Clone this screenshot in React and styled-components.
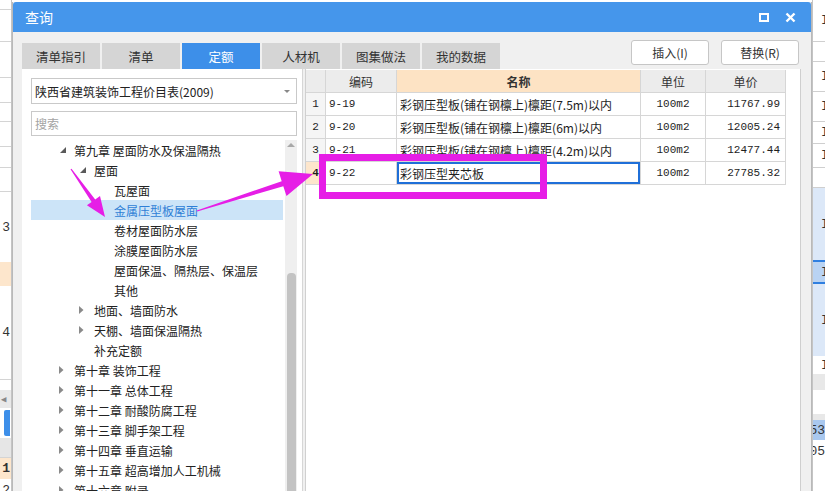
import React from "react";
import styled, { createGlobalStyle } from "styled-components";

const GlobalStyle = createGlobalStyle`
	html, body {
		margin: 0;
		padding: 0;
		background: #ffffff;
		overflow: hidden;
	}
	body {
		font-family: "Noto Sans CJK SC", "Noto Sans", sans-serif;
		font-size: 12px;
		color: #222;
	}
`;

const Page = styled.div`
	position: relative;
	width: 825px;
	height: 491px;
	display: flex;
	flex-direction: row;
	overflow: hidden;
	background: #fff;
`;

/* ---------- the app behind the dialog ---------- */

const Strip = styled.div`
	width: ${(p) => p.w}px;
	flex: 0 0 auto;
	display: flex;
	flex-direction: column;
	background: #fff;
	overflow: hidden;
	border-${(p) => p.side}: 1px solid #c4c4c4;
	box-sizing: border-box;
`;

const StripCell = styled.div`
	height: ${(p) => p.h}px;
	flex: 0 0 auto;
	box-sizing: border-box;
	background: ${(p) => p.bg || "transparent"};
	border-bottom: ${(p) => (p.line ? `1px solid ${p.line}` : "none")};
	border-top: ${(p) => (p.top ? `2px solid ${p.top}` : "none")};
	display: flex;
	align-items: center;
	justify-content: ${(p) => p.justify || "flex-end"};
	padding: 0 1px 0 ${(p) => p.indent || 1}px;
	font-family: "Liberation Mono", monospace;
	font-size: 13px;
	font-weight: ${(p) => (p.bold ? 700 : 400)};
	color: #333;
	white-space: nowrap;
	overflow: hidden;
`;

const BlueTab = styled.div`
	width: 6px;
	height: 26px;
	margin-left: auto;
	background: #3d8fe9;
	border-radius: 2px 0 0 2px;
`;

/* ---------- dialog ---------- */

const Dialog = styled.div`
	width: 800px;
	flex: 0 0 auto;
	margin-top: 2px;
	display: flex;
	flex-direction: column;
	background: #f0f0f0;
	border-left: 1px solid #b9b9b9;
	border-right: 1px solid #b9b9b9;
	box-sizing: border-box;
`;

const TitleBar = styled.div`
	height: 30px;
	flex: 0 0 auto;
	background: #4596eb;
	border-radius: 3px 3px 0 0;
	display: flex;
	align-items: center;
	padding: 0 10px 0 12px;
	color: #fff;
	font-size: 14px;
`;

const TitleText = styled.div`
	flex: 1 0 0;
`;

const TitleButton = styled.div`
	width: 22px;
	height: 20px;
	display: flex;
	align-items: center;
	justify-content: center;
	margin-left: ${(p) => p.gap || 0}px;
`;

const Body = styled.div`
	flex: 1 0 0;
	display: flex;
	flex-direction: column;
	padding: 11px 10px 0 9px;
	min-height: 0;
`;

const TopRow = styled.div`
	height: 26px;
	display: flex;
	flex-direction: row;
	align-items: flex-start;
`;

const Tab = styled.div`
	width: 78px;
	height: 26px;
	margin-right: 2px;
	display: flex;
	align-items: center;
	justify-content: center;
	background: ${(p) => (p.active ? "#3d8fe9" : "#d5d5d5")};
	color: ${(p) => (p.active ? "#fff" : "#333")};
	font-size: 12.5px;
`;

const Buttons = styled.div`
	margin-left: auto;
	margin-top: -3px;
	margin-right: 2px;
	display: flex;
	gap: 12px;
`;

const Button = styled.div`
	width: 78px;
	height: 25px;
	box-sizing: border-box;
	border: 1px solid #c6c6c6;
	border-radius: 3px;
	background: #fff;
	display: flex;
	align-items: center;
	justify-content: center;
	font-size: 12px;
	color: #333;
`;

const Content = styled.div`
	flex: 1 0 0;
	display: flex;
	flex-direction: row;
	gap: 2px;
	min-height: 0;
`;

/* ---------- left panel ---------- */

const LeftPanel = styled.div`
	width: 281px;
	flex: 0 0 auto;
	background: #fff;
	border-right: 1px solid #d6d6d6;
	box-sizing: border-box;
	display: flex;
	flex-direction: column;
	padding: 9px 5px 0 9px;
	overflow: hidden;
`;

const Select = styled.div`
	height: 26px;
	box-sizing: border-box;
	border: 1px solid #c9c9c9;
	display: flex;
	align-items: center;
	padding: 0 6px 0 3px;
	font-size: 12px;
	color: #222;
`;

const SelectText = styled.div`
	flex: 1 0 0;
`;

const Caret = styled.div`
	width: 0;
	height: 0;
	border-left: 3px solid transparent;
	border-right: 3px solid transparent;
	border-top: 3px solid #888;
`;

const Search = styled.div`
	height: 25px;
	margin-top: 7px;
	box-sizing: border-box;
	border: 1px solid #c9c9c9;
	display: flex;
	align-items: center;
	padding: 0 3px;
	font-size: 12px;
	color: #a3a3a3;
`;

const TreeArea = styled.div`
	flex: 1 0 0;
	margin-top: 4px;
	display: flex;
	flex-direction: row;
	min-height: 0;
`;

const Tree = styled.div`
	flex: 1 0 0;
	display: flex;
	flex-direction: column;
	padding-right: 2px;
`;

const TreeRow = styled.div`
	height: 20px;
	flex: 0 0 auto;
	display: flex;
	align-items: center;
	padding-left: ${(p) => 27 + p.level * 20}px;
	background: ${(p) => (p.selected ? "#cce4f8" : "transparent")};
	color: ${(p) => (p.selected ? "#2f7fd6" : "#222")};
	font-size: 12px;
	white-space: nowrap;
`;

const Toggle = styled.div`
	width: 16px;
	height: 20px;
	flex: 0 0 auto;
	display: flex;
	align-items: center;
	justify-content: flex-start;
	padding-left: ${(p) => (p.open ? 2 : 1)}px;
	box-sizing: border-box;
`;

const Scrollbar = styled.div`
	width: 12px;
	flex: 0 0 auto;
	background: #efefef;
	display: flex;
	flex-direction: column;
	align-items: center;
`;

const ScrollArrow = styled.div`
	margin-top: 3px;
	width: 0;
	height: 0;
	border-left: 4px solid transparent;
	border-right: 4px solid transparent;
	border-bottom: 4px solid #a8a8a8;
`;

const ScrollThumb = styled.div`
	margin-top: 126px;
	width: 9px;
	flex: 1 0 0;
	background: #c3c3c3;
	border-radius: 4px 4px 0 0;
`;

/* ---------- right panel / grid ---------- */

const RightPanel = styled.div`
	flex: 1 0 0;
	background: #fff;
	border-left: 1px solid #d0d0d0;
	border-right: 1px solid #cfcfcf;
	padding-top: 1px;
	display: flex;
	flex-direction: column;
`;

const GridRow = styled.div`
	display: grid;
	grid-template-columns: 20px 71px 244px 65px 80px;
	height: 23px;
	width: 480px;
`;

const Cell = styled.div`
	box-sizing: border-box;
	border-right: 1px solid #d6d6d6;
	border-bottom: 1px solid #d6d6d6;
	display: flex;
	align-items: center;
	justify-content: ${(p) => p.align || "flex-start"};
	padding: 0 ${(p) => (p.align === "flex-end" ? 5 : 3)}px;
	background: ${(p) => p.bg || "#fff"};
	font-family: ${(p) =>
		p.mono ? `"Liberation Mono", "Noto Sans CJK SC", monospace` : `"Noto Sans CJK SC", sans-serif`};
	font-size: ${(p) => (p.mono ? "11px" : "12px")};
	font-weight: ${(p) => (p.bold ? 700 : 400)};
	color: #1e1e1e;
	white-space: nowrap;
	box-shadow: ${(p) => (p.editing ? "inset 0 0 0 2px #1f6fd8" : "none")};
`;

const HeadCell = styled(Cell)`
	background: ${(p) => p.bg || "#ececec"};
	justify-content: center;
	color: #333;
`;

const Overlay = styled.svg`
	position: absolute;
	left: 0;
	top: 0;
	pointer-events: none;
`;

/* ---------- data ---------- */

const tabs = ["清单指引", "清单", "定额", "人材机", "图集做法", "我的数据"];

const tree = [
	{ level: 0, toggle: "open", text: "第九章 屋面防水及保温隔热" },
	{ level: 1, toggle: "open", text: "屋面" },
	{ level: 2, text: "瓦屋面" },
	{ level: 2, text: "金属压型板屋面", selected: true },
	{ level: 2, text: "卷材屋面防水层" },
	{ level: 2, text: "涂膜屋面防水层" },
	{ level: 2, text: "屋面保温、隔热层、保温层" },
	{ level: 2, text: "其他" },
	{ level: 1, toggle: "closed", text: "地面、墙面防水" },
	{ level: 1, toggle: "closed", text: "天棚、墙面保温隔热" },
	{ level: 1, text: "补充定额" },
	{ level: 0, toggle: "closed", text: "第十章 装饰工程" },
	{ level: 0, toggle: "closed", text: "第十一章 总体工程" },
	{ level: 0, toggle: "closed", text: "第十二章 耐酸防腐工程" },
	{ level: 0, toggle: "closed", text: "第十三章 脚手架工程" },
	{ level: 0, toggle: "closed", text: "第十四章 垂直运输" },
	{ level: 0, toggle: "closed", text: "第十五章 超高增加人工机械" },
	{ level: 0, toggle: "closed", text: "第十六章 附录" },
];

const rows = [
	{ no: "1", code: "9-19", name: "彩钢压型板(铺在钢檩上)檩距(7.5m)以内", unit: "100m2", price: "11767.99" },
	{ no: "2", code: "9-20", name: "彩钢压型板(铺在钢檩上)檩距(6m)以内", unit: "100m2", price: "12005.24" },
	{ no: "3", code: "9-21", name: "彩钢压型板(铺在钢檩上)檩距(4.2m)以内", unit: "100m2", price: "12477.44" },
	{ no: "4", code: "9-22", name: "彩钢压型夹芯板", unit: "100m2", price: "27785.32", current: true },
];

function ToggleIcon({ type }) {
	if (type === "open") {
		return (
			<svg width="6" height="6" viewBox="0 0 6 6">
				<path d="M6 0 L6 6 L0 6 Z" fill="#5a5a5a" />
			</svg>
		);
	}
	return (
		<svg width="5" height="8" viewBox="0 0 5 8">
			<path d="M0 0 L4.5 4 L0 8 Z" fill="#8a8a8a" />
		</svg>
	);
}

function arrowPoints(sx, sy, tx, ty, headLen, headHalf, shaft) {
	const dx = tx - sx;
	const dy = ty - sy;
	const len = Math.hypot(dx, dy);
	const ux = dx / len;
	const uy = dy / len;
	const nx = -uy;
	const ny = ux;
	const bx = tx - ux * headLen;
	const by = ty - uy * headLen;
	const pts = [
		[sx + nx * 0.6, sy + ny * 0.6],
		[bx + nx * shaft, by + ny * shaft],
		[bx + nx * headHalf, by + ny * headHalf],
		[tx, ty],
		[bx - nx * headHalf, by - ny * headHalf],
		[bx - nx * shaft, by - ny * shaft],
		[sx - nx * 0.6, sy - ny * 0.6],
	];
	return pts.map((p) => p.map((v) => v.toFixed(1)).join(",")).join(" ");
}

function Annotations() {
	const magenta = "#e61ee6";
	return (
		<Overlay width="825" height="491" viewBox="0 0 825 491">
			<rect x="322.5" y="157.5" width="221" height="38" fill="none" stroke={magenta} strokeWidth="7" />
			<polygon points={arrowPoints(71, 169, 105, 217, 20, 8, 2.2)} fill={magenta} />
			<polygon points={arrowPoints(197, 211, 313, 174, 32, 13, 2.6)} fill={magenta} />
		</Overlay>
	);
}

function LeftBackground() {
	return (
		<Strip w={12} side="right">
			<StripCell h={10} line="#d4d4d4" />
			<StripCell h={32} line="#d4d4d4" />
			<StripCell h={36} line="#d4d4d4" />
			<StripCell h={25} line="#d4d4d4" />
			<StripCell h={19} line="#d4d4d4" />
			<StripCell h={25} line="#d4d4d4" />
			<StripCell h={21} line="#d4d4d4" />
			<StripCell h={24} line="#d4d4d4" />
			<StripCell h={70}>3</StripCell>
			<StripCell h={24} bg="#fde6cc" />
			<StripCell h={94} line="#d4d4d4">4</StripCell>
			<StripCell h={10} />
			<StripCell h={18} bg="#e9e9e9" justify="flex-start" style={{ fontSize: 9, color: "#888" }}>◀</StripCell>
			<StripCell h={30}>
				<BlueTab />
			</StripCell>
			<StripCell h={20} bg="#e6e6e6" line="#d4d4d4" />
			<StripCell h={21} bg="#fde6cc" bold>1</StripCell>
			<StripCell h={22}>2</StripCell>
		</Strip>
	);
}

function RightBackground() {
	return (
		<Strip w={13} side="left">
			<StripCell h={42} line="#cfcfcf" justify="flex-start" indent={8}>I</StripCell>
			<StripCell h={20} line="#cfcfcf" />
			<StripCell h={30} line="#cfcfcf" justify="flex-start" indent={8}>I</StripCell>
			<StripCell h={30} line="#cfcfcf" justify="flex-start" indent={8}>I</StripCell>
			<StripCell h={22} line="#cfcfcf" justify="flex-start" indent={8}>I</StripCell>
			<StripCell h={24} line="#cfcfcf" justify="flex-start" indent={8}>I</StripCell>
			<StripCell h={20} line="#cfcfcf" />
			<StripCell h={72} bg="#dce8f8" justify="flex-start" indent={8}>I</StripCell>
			<StripCell h={24} bg="#b9d3f3" top="#2f7fe0" justify="flex-start" indent={8} style={{ borderBottom: "2px solid #2f7fe0" }}>I</StripCell>
			<StripCell h={72} bg="#dce8f8" justify="flex-start" indent={8}>I</StripCell>
			<StripCell h={18} justify="flex-start" indent={8}>I</StripCell>
			<StripCell h={16} bg="#e8e8e8" />
			<StripCell h={24} />
			<StripCell h={6} bg="#e8e8e8" />
			<StripCell h={20} bg="#a9c8ef" justify="flex-end" style={{ paddingRight: 0 }}>53</StripCell>
			<StripCell h={22} justify="flex-end" style={{ paddingRight: 0 }}>05</StripCell>
		</Strip>
	);
}

export default function App() {
	return (
		<>
			<GlobalStyle />
			<Page>
				<LeftBackground />
				<Dialog>
					<TitleBar>
						<TitleText>查询</TitleText>
						<TitleButton>
							<svg width="10" height="9" viewBox="0 0 10 9">
								<rect x="1" y="1" width="8" height="7" fill="none" stroke="#fff" strokeWidth="2" />
							</svg>
						</TitleButton>
						<TitleButton gap={4}>
							<svg width="11" height="11" viewBox="0 0 11 11">
								<path d="M1.5 1.5 L9.5 9.5 M9.5 1.5 L1.5 9.5" stroke="#fff" strokeWidth="2.4" />
							</svg>
						</TitleButton>
					</TitleBar>
					<Body>
						<TopRow>
							{tabs.map((t) => (
								<Tab key={t} active={t === "定额"}>{t}</Tab>
							))}
							<Buttons>
								<Button>插入(I)</Button>
								<Button>替换(R)</Button>
							</Buttons>
						</TopRow>
						<Content>
							<LeftPanel>
								<Select>
									<SelectText>陕西省建筑装饰工程价目表(2009)</SelectText>
									<Caret />
								</Select>
								<Search>搜索</Search>
								<TreeArea>
									<Tree>
										{tree.map((n) => (
											<TreeRow key={n.text} level={n.level} selected={n.selected}>
												<Toggle open={n.toggle === "open"}>
													{n.toggle && <ToggleIcon type={n.toggle} />}
												</Toggle>
												{n.text}
											</TreeRow>
										))}
									</Tree>
									<Scrollbar>
										<ScrollArrow />
										<ScrollThumb />
									</Scrollbar>
								</TreeArea>
							</LeftPanel>
							<RightPanel>
								<GridRow>
									<HeadCell />
									<HeadCell>编码</HeadCell>
									<HeadCell bg="#fde3c4" bold>名称</HeadCell>
									<HeadCell>单位</HeadCell>
									<HeadCell>单价</HeadCell>
								</GridRow>
								{rows.map((r) => (
									<GridRow key={r.no}>
										<Cell align="center" mono bold={r.current} bg={r.current ? "#fde6cc" : "#f5f5f5"}>
											{r.no}
										</Cell>
										<Cell mono>{r.code}</Cell>
										<Cell editing={r.current}>{r.name}</Cell>
										<Cell mono align="center">{r.unit}</Cell>
										<Cell mono align="flex-end">{r.price}</Cell>
									</GridRow>
								))}
							</RightPanel>
						</Content>
					</Body>
				</Dialog>
				<RightBackground />
				<Annotations />
			</Page>
		</>
	);
}
